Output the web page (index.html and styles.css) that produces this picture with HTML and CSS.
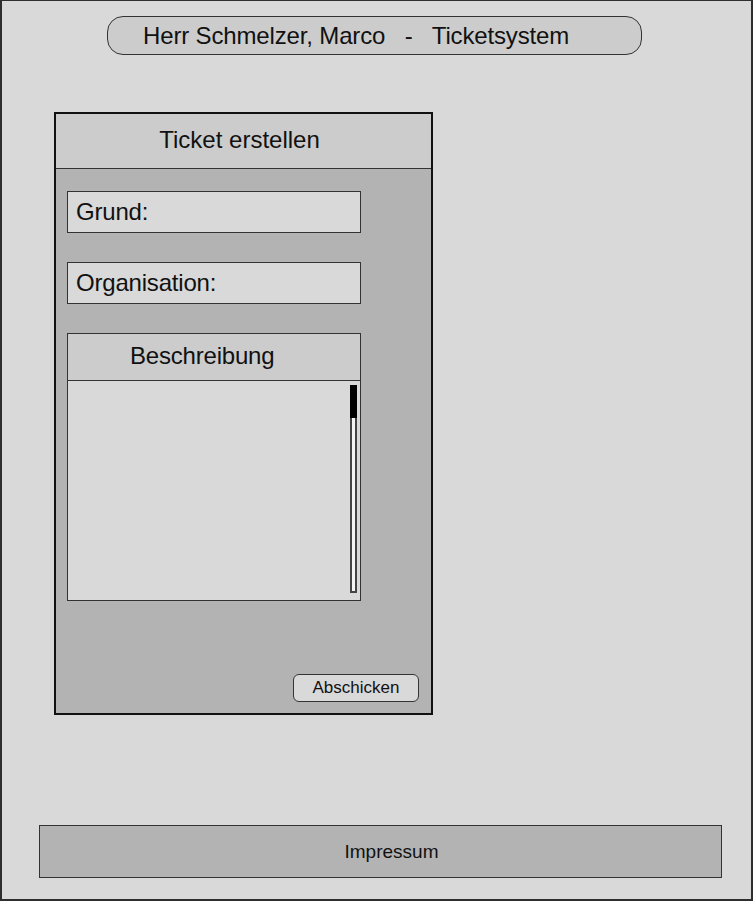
FILE: index.html
```html
<!DOCTYPE html>
<html lang="de">
<head>
<meta charset="utf-8">
<title>Ticketsystem</title>
<link rel="stylesheet" href="styles.css">
</head>
<body>
<div class="frame">
  <div class="title-bar"><span class="title-text">Herr Schmelzer, Marco   -   Ticketsystem</span></div>
  <div class="panel">
    <div class="panel-head">Ticket erstellen</div>
    <div class="panel-body">
      <div class="field">Grund:</div>
      <div class="field">Organisation:</div>
      <div class="desc">
        <div class="desc-head">Beschreibung</div>
        <div class="desc-body">
          <div class="scrollbar"><div class="thumb"></div></div>
        </div>
      </div>
    </div>
    <button class="send" type="button">Abschicken</button>
  </div>
  <div class="footer">Impressum</div>
</div>
</body>
</html>
```

FILE: styles.css
```css
html, body {
  margin: 0;
  padding: 0;
  background: #d9d9d9;
}
body {
  font-family: "Liberation Sans", Arial, sans-serif;
  color: #111;
}
.frame {
  box-sizing: border-box;
  width: 753px;
  height: 901px;
  border: 2px solid #2e2e2e;
  border-top-width: 1px;
  background: #d9d9d9;
  display: flex;
  flex-direction: column;
  padding-top: 15px;
}
.title-bar {
  box-sizing: border-box;
  margin-left: 105px;
  width: 535px;
  height: 39px;
  border: 1px solid #333;
  border-radius: 16px;
  background: #cccccc;
  display: flex;
  align-items: center;
  padding-left: 35px;
  font-size: 24px;
}
.title-text {
  white-space: pre;
  letter-spacing: -0.15px;
}
.panel {
  box-sizing: border-box;
  margin-top: 57px;
  margin-left: 52px;
  width: 379px;
  height: 603px;
  border: 2px solid #111;
  background: #b3b3b3;
  display: flex;
  flex-direction: column;
}
.panel-head {
  box-sizing: border-box;
  height: 55px;
  border-bottom: 1px solid #333;
  background: #cccccc;
  display: flex;
  align-items: center;
  justify-content: center;
  font-size: 24px;
  padding-right: 8px;
  padding-bottom: 3px;
}
.panel-body {
  display: flex;
  flex-direction: column;
  gap: 29px;
  padding: 22px 0 0 11px;
}
.field {
  box-sizing: border-box;
  width: 294px;
  height: 42px;
  border: 1px solid #333;
  background: #d9d9d9;
  display: flex;
  align-items: center;
  padding-left: 8px;
  font-size: 24px;
  letter-spacing: -0.2px;
}
.desc {
  box-sizing: border-box;
  width: 294px;
  height: 268px;
  border: 1px solid #333;
  background: #d9d9d9;
  display: flex;
  flex-direction: column;
}
.desc-head {
  box-sizing: border-box;
  height: 47px;
  border-bottom: 1px solid #333;
  background: #cccccc;
  display: flex;
  align-items: center;
  padding-left: 62px;
  padding-bottom: 3px;
  font-size: 24px;
  letter-spacing: -0.2px;
}
.desc-body {
  flex: 1;
  display: flex;
  justify-content: flex-end;
  padding: 4px 3px 0 0;
}
.scrollbar {
  box-sizing: border-box;
  width: 7px;
  height: 208px;
  border: 2px solid #444;
  background: #f4f4f4;
}
.thumb {
  height: 33px;
  background: #000;
  margin: -2px;
}
.send {
  margin-top: auto;
  margin-bottom: 11px;
  margin-right: 12px;
  align-self: flex-end;
  box-sizing: border-box;
  width: 126px;
  height: 28px;
  border: 1px solid #333;
  border-radius: 6px;
  background: #d9d9d9;
  font-family: "Liberation Sans", Arial, sans-serif;
  font-size: 17px;
  color: #111;
  padding: 0;
}
.footer {
  box-sizing: border-box;
  margin-top: auto;
  margin-bottom: 21px;
  margin-left: 37px;
  width: 683px;
  height: 53px;
  border: 1px solid #333;
  background: #b3b3b3;
  display: flex;
  align-items: center;
  justify-content: center;
  font-size: 19px;
  padding-left: 22px;
}
```
